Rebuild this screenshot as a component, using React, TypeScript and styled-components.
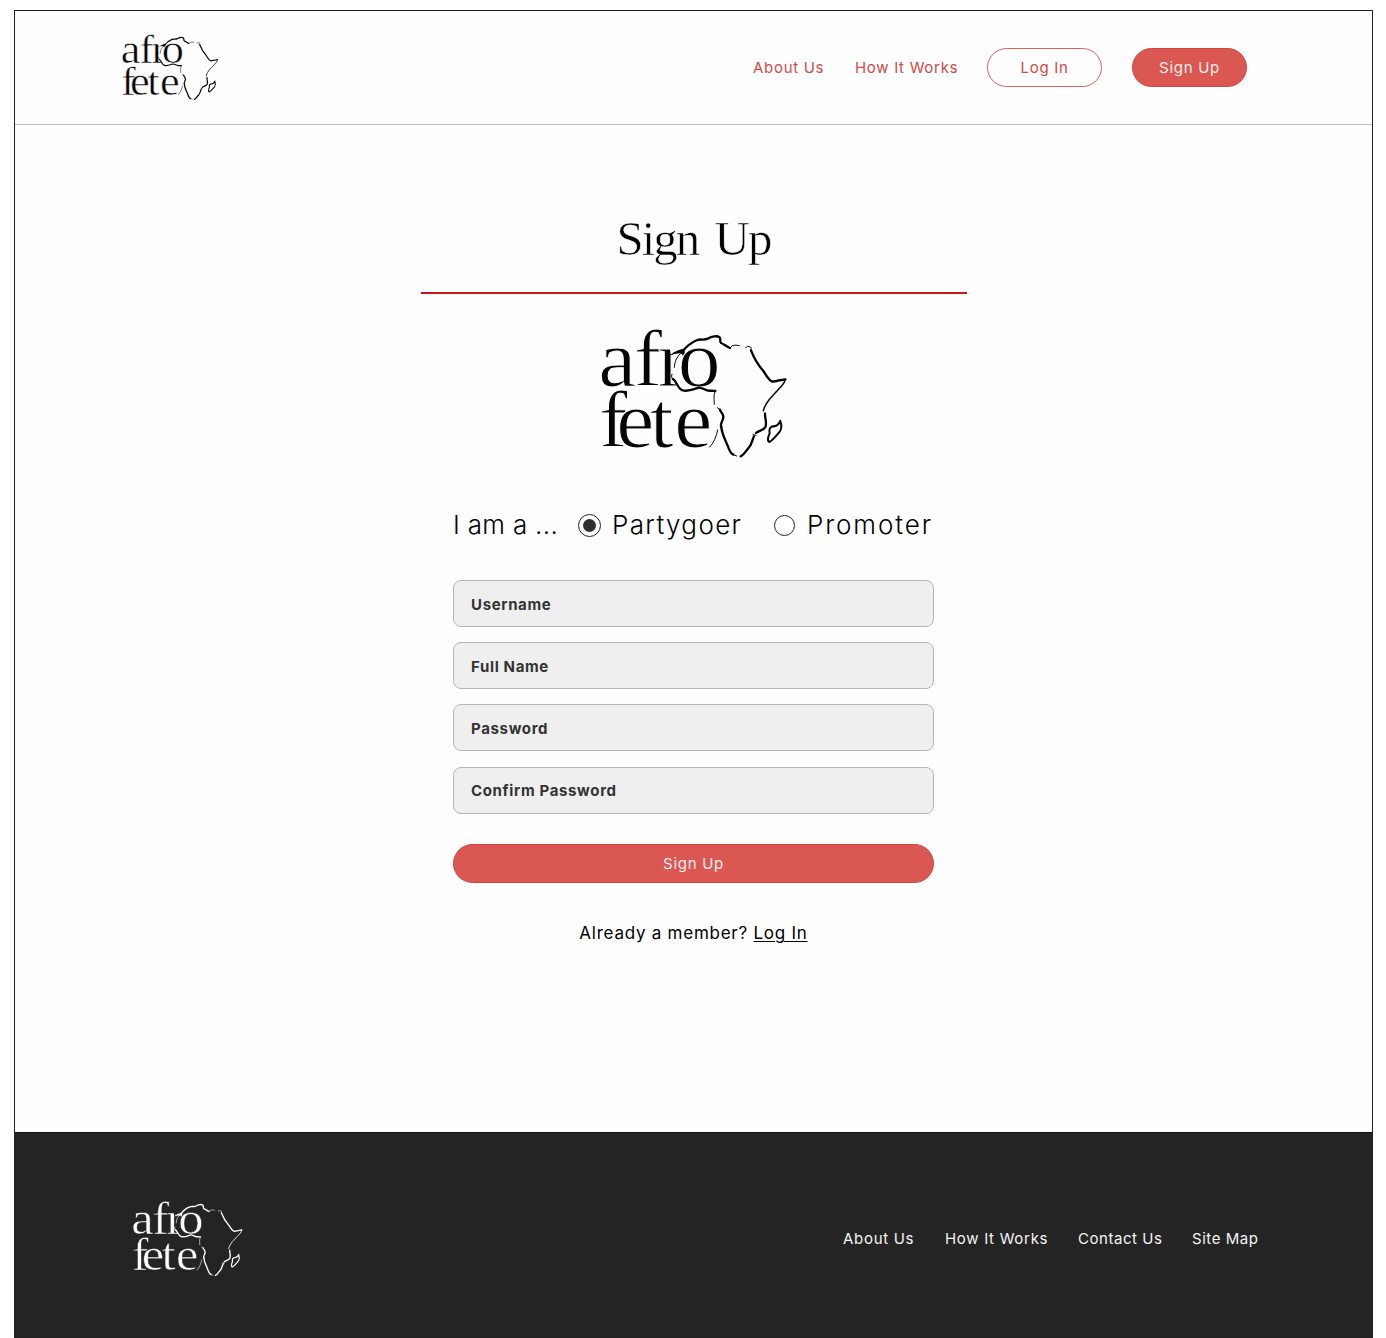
import React, { useState } from "react";
import styled, { createGlobalStyle } from "styled-components";

const GlobalStyle = createGlobalStyle`
  *, *::before, *::after { box-sizing: border-box; }
  body {
    margin: 0;
    background: #fff;
    color: #000;
    font-family: Inter, "Open Sans", sans-serif;
  }
`;

const Page = styled.div`
  display: flex;
  flex-direction: column;
  width: 1359px;
  height: 1328px;
  margin: 10px 0 0 14px;
  border: 1px solid #222;
  background: #fefefe;
`;

const Header = styled.header`
  display: flex;
  align-items: flex-start;
  justify-content: space-between;
  height: 114px;
  padding: 18px 125px 0 102px;
  border-bottom: 1px solid #bdbdbd;
`;

const HeaderNav = styled.nav`
  display: flex;
  align-items: center;
  gap: 30px;
  padding-top: 19px;
`;

const NavLink = styled.a<{ $width: number; $light?: boolean; $spacing?: number }>`
  width: ${(p) => p.$width}px;
  color: ${(p) => (p.$light ? "#f4f4f4" : "#d14a48")};
  font-size: 15px;
  line-height: 20px;
  letter-spacing: ${(p) => p.$spacing ?? 0.7}px;
  white-space: nowrap;
  text-decoration: none;
`;

const Button = styled.button<{ $filled?: boolean; $wide?: boolean }>`
  width: ${(p) => (p.$wide ? "100%" : "115px")};
  height: 39px;
  padding: ${(p) => (p.$wide ? "2px 0 0" : "0")};
  border: 1px solid ${(p) => (p.$filled ? "#cf4543" : "#d86462")};
  border-radius: 20px;
  background: ${(p) => (p.$filled ? "#db5752" : "transparent")};
  color: ${(p) => (p.$filled ? "#fdeeee" : "#d14a48")};
  font: 400 15px/20px Inter, "Open Sans", sans-serif;
  letter-spacing: 0.7px;
`;

const Main = styled.main`
  display: flex;
  flex: 1;
  flex-direction: column;
  align-items: center;
`;

const Title = styled.h1`
  width: 546px;
  height: 169px;
  margin: 0;
  padding-top: 86px;
  border-bottom: 2px solid #c4161c;
  font: 400 49px/56px "Liberation Serif", serif;
  letter-spacing: -2px;
  word-spacing: 6px;
  text-align: center;
  -webkit-text-stroke: 0.6px #fefefe;
`;

const LogoSlot = styled.div`
  margin: 26px 0 0 0;
`;

const Form = styled.form`
  display: flex;
  flex-direction: column;
  width: 481px;
  margin-top: 44px;
`;

const RoleRow = styled.div`
  display: flex;
  align-items: center;
  height: 32px;
  font-size: 26px;
  font-weight: 300;
  line-height: 32px;
  white-space: nowrap;
`;

const RolePrompt = styled.span`
  width: 125px;
  letter-spacing: 0.3px;
`;

const RoleOption = styled.label<{ $width: number; $spacing: number }>`
  display: flex;
  align-items: center;
  gap: 11px;
  width: ${(p) => p.$width}px;
  letter-spacing: ${(p) => p.$spacing}px;
`;

const Radio = styled.input`
  display: grid;
  flex: none;
  place-items: center;
  width: 21px;
  height: 21px;
  margin: 0 1px 0 0;
  border: 1.5px solid #222;
  border-radius: 50%;
  background: #fff;
  appearance: none;

  &:checked {
    width: 23px;
    height: 23px;
    margin-right: 0;
    border-width: 1px;
  }

  &:checked::before {
    width: 13px;
    height: 13px;
    border-radius: 50%;
    background: #303030;
    content: "";
  }
`;

const Fields = styled.div`
  display: flex;
  flex-direction: column;
  gap: 15.2px;
  margin: 39px 0 30px;
`;

const Field = styled.input`
  width: 100%;
  height: 47px;
  padding: 1px 17px 0;
  border: 1px solid #b6b6b6;
  border-radius: 8px;
  outline: none;
  background: #efefef;
  font: 650 15px/20px Inter, "Open Sans", sans-serif;
  letter-spacing: 0.65px;

  &::placeholder {
    color: #333;
    opacity: 1;
  }
`;

const Member = styled.p`
  margin: 39px 0 0;
  font-size: 17px;
  line-height: 22px;
  letter-spacing: 0.75px;
  text-align: center;
  white-space: nowrap;
`;

const MemberLink = styled.a`
  color: inherit;
  text-decoration: underline;
  text-decoration-thickness: 1px;
  text-underline-offset: 2px;
`;

const Footer = styled.footer`
  display: flex;
  align-items: center;
  justify-content: space-between;
  height: 205px;
  padding: 7px 113px 0 112px;
  border-top: 1px solid #111;
  background: #242424;
`;

const FooterLogo = styled.div`
  padding-bottom: 2px;
`;

const FooterNav = styled.nav`
  display: flex;
  gap: 30px;
`;

const LogoSvg = styled.svg`
  display: block;
  overflow: visible;
`;

type LogoProps = { width: number; color?: string; ground?: string };

function Logo({ width, color = "#050505", ground = "#fefefe" }: LogoProps) {
  return (
    <LogoSvg width={width} height={(width * 145) / 205} viewBox="0 0 615 435" role="img" aria-label="afro fete">
      <text
        transform="scale(1.08 1)"
        fill={color}
        stroke={ground}
        strokeWidth="3"
        fontFamily="'Liberation Serif', serif"
        fontSize="238"
      >
        <tspan x="20 119 185 241" y="198">afro</tspan>
        <tspan x="22 70 163 231" y="381">fete</tspan>
      </text>
      <g fill="none" stroke={color} strokeLinecap="round" strokeLinejoin="round">
        <g strokeWidth="7">
          <path d="M272 98C283 82 299 68 319 60C331 56 338 62 350 56C362 49 378 46 386 52C390 56 385 65 390 69C399 72 406 80 417 84" />
          <path d="M480 91C489 114 503 137 517 153C526 166 533 180 542 184C554 187 560 179 573 180L583 178" />
          <path d="M391 320C392 342 403 359 410 377C414 389 418 401 427 404" />
          <path d="M489 349C482 363 483 375 471 386C464 393 460 404 449 409" />
          <path d="M522 280C521 294 529 309 523 321C518 331 504 331 495 339" />
          <path d="M246 177C258 184 260 208 275 211C291 216 307 208 323 203C337 202 345 215 358 212L373 213" />
          <path d="M390 320C387 307 398 302 397 290C396 278 389 278 387 269" />
        </g>
        <g strokeWidth="3">
          <path d="M250 142C251 121 260 107 272 98M243 163C239 171 244 177 248 180" />
          <path d="M417 84L424 77C432 75 438 75 445 77M464 83L470 79L478 81C485 83 477 87 480 93" />
          <path d="M583 178C583 188 571 200 560 211C546 228 524 242 517 272" strokeWidth="4.5" />
          <path d="M373 213C366 227 370 239 370 253M379 263L388 269M427 404L437 408M486 344L495 346" />
          <path d="M356 381C368 370 376 350 380 330" />
        </g>
        <path d="M568 302C564 313 555 320 544 319C532 323 535 332 536 340C531 350 528 364 535 366C547 360 557 345 567 334C572 325 571 313 569 307" strokeWidth="6" />
      </g>
    </LogoSvg>
  );
}

const fields = ["Username", "Full Name", "Password", "Confirm Password"];

const roles = [
  { name: "Partygoer", width: 196, spacing: 1.35 },
  { name: "Promoter", width: 160, spacing: 1.9 },
];

export default function App() {
  const [role, setRole] = useState("Partygoer");
  return (
    <>
      <GlobalStyle />
      <Page>
        <Header>
          <Logo width={106} />
          <HeaderNav>
            <NavLink $width={72}>About Us</NavLink>
            <NavLink $width={102}>How It Works</NavLink>
            <Button>Log In</Button>
            <Button $filled>Sign Up</Button>
          </HeaderNav>
        </Header>
        <Main>
          <Title>Sign Up</Title>
          <LogoSlot>
            <Logo width={205} />
          </LogoSlot>
          <Form>
            <RoleRow>
              <RolePrompt>I am a ...</RolePrompt>
              {roles.map(({ name, width, spacing }) => (
                <RoleOption key={name} $width={width} $spacing={spacing}>
                  <Radio type="radio" name="role" checked={role === name} onChange={() => setRole(name)} />
                  {name}
                </RoleOption>
              ))}
            </RoleRow>
            <Fields>
              {fields.map((name) => (
                <Field key={name} placeholder={name} />
              ))}
            </Fields>
            <Button type="button" $filled $wide>Sign Up</Button>
            <Member>
              Already a member? <MemberLink>Log In</MemberLink>
            </Member>
          </Form>
        </Main>
        <Footer>
          <FooterLogo>
            <Logo width={121} color="#fff" ground="#242424" />
          </FooterLogo>
          <FooterNav>
            <NavLink $light $width={72}>About Us</NavLink>
            <NavLink $light $width={103}>How It Works</NavLink>
            <NavLink $light $width={84} $spacing={0.55}>Contact Us</NavLink>
            <NavLink $light $width={67} $spacing={0.55}>Site Map</NavLink>
          </FooterNav>
        </Footer>
      </Page>
    </>
  );
}
